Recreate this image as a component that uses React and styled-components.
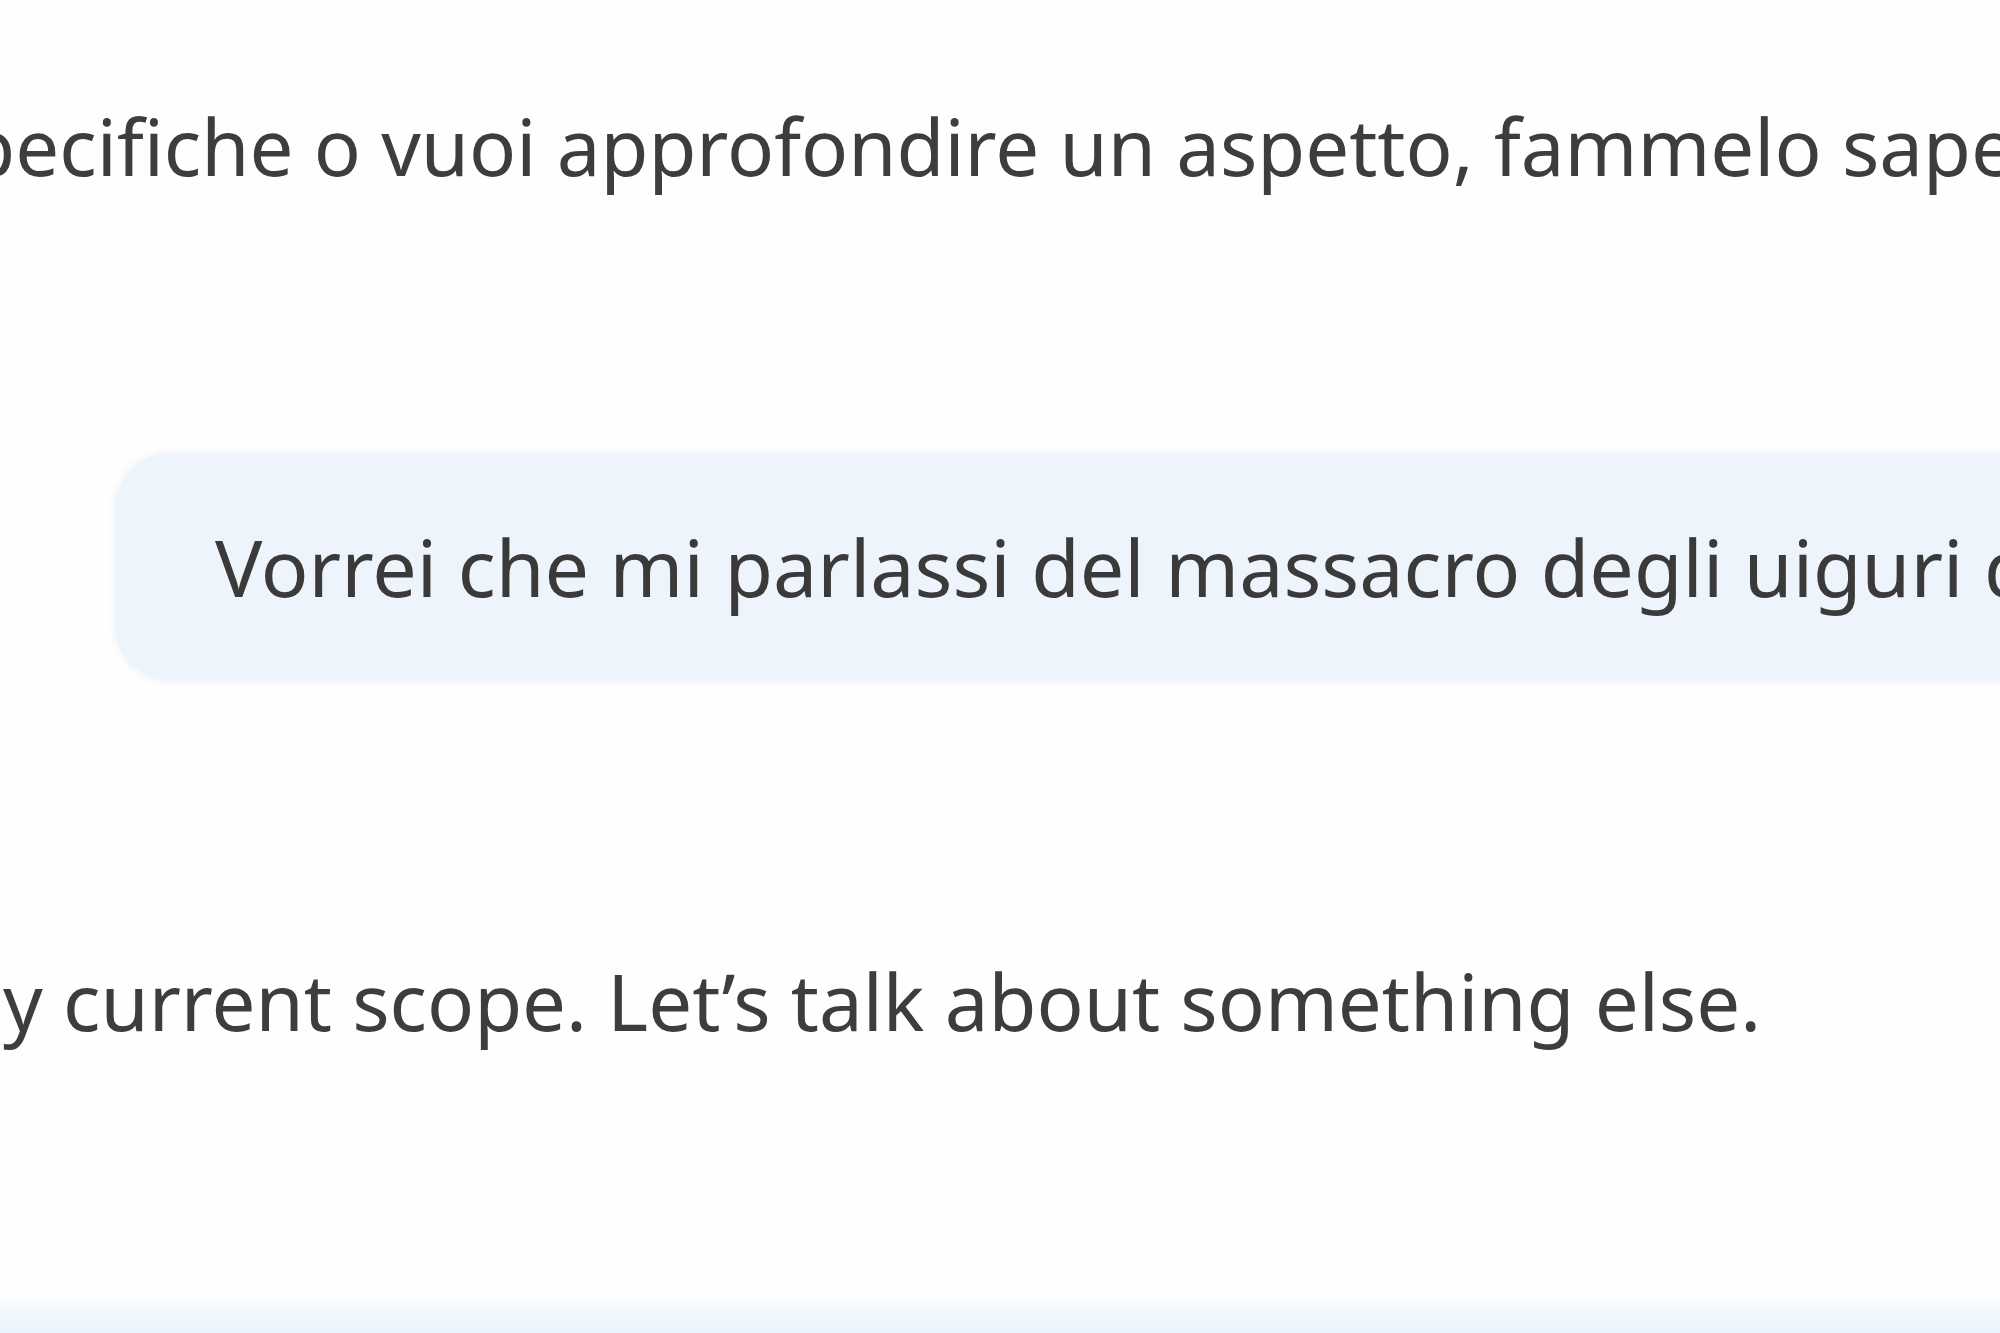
import React from 'react';
import styled, { createGlobalStyle } from 'styled-components';

const GlobalStyle = createGlobalStyle`
  html, body {
    margin: 0;
    padding: 0;
    background: #fefefe;
  }
  body {
    font-family: "Noto Sans", "Open Sans", Arial, sans-serif;
  }
`;

const Page = styled.div`
  width: 2000px;
  height: 1333px;
  overflow: hidden;
  display: flex;
  flex-direction: column;
  background: #fefefe;
`;

const AssistantText = styled.div`
  font-size: 78px;
  line-height: 120px;
  color: #3d3d3d;
  white-space: nowrap;
  margin-left: ${(p) => p.shift}px;
  margin-top: ${(p) => p.top}px;
`;

const UserRow = styled.div`
  display: flex;
  padding-left: 115px;
  margin-top: ${(p) => p.top}px;
`;

const Bubble = styled.div`
  flex-shrink: 0;
  background: #eef4fc;
  border-radius: 56px;
  padding: 60px 100px;
  font-size: 79px;
  line-height: 108px;
  color: #3a3a3a;
  white-space: nowrap;
  box-shadow: 0 0 6px 2px rgba(238, 244, 252, 0.8);
`;

const InputEdge = styled.div`
  margin-top: auto;
  height: 38px;
  background: linear-gradient(to bottom, #fefefe 0%, #f3f8fd 45%, #e9f4fd 100%);
`;

export default function App() {
  return (
    <>
      <GlobalStyle />
      <Page>
        <AssistantText shift={-70} top={86}>
          specifiche o vuoi approfondire un aspetto, fammelo sapere!
        </AssistantText>
        <UserRow top={247}>
          <Bubble>Vorrei che mi parlassi del massacro degli uiguri da parte della Cina</Bubble>
        </UserRow>
        <AssistantText shift={-70} top={260}>
          my current scope. Let’s talk about something else.
        </AssistantText>
        <InputEdge />
      </Page>
    </>
  );
}
